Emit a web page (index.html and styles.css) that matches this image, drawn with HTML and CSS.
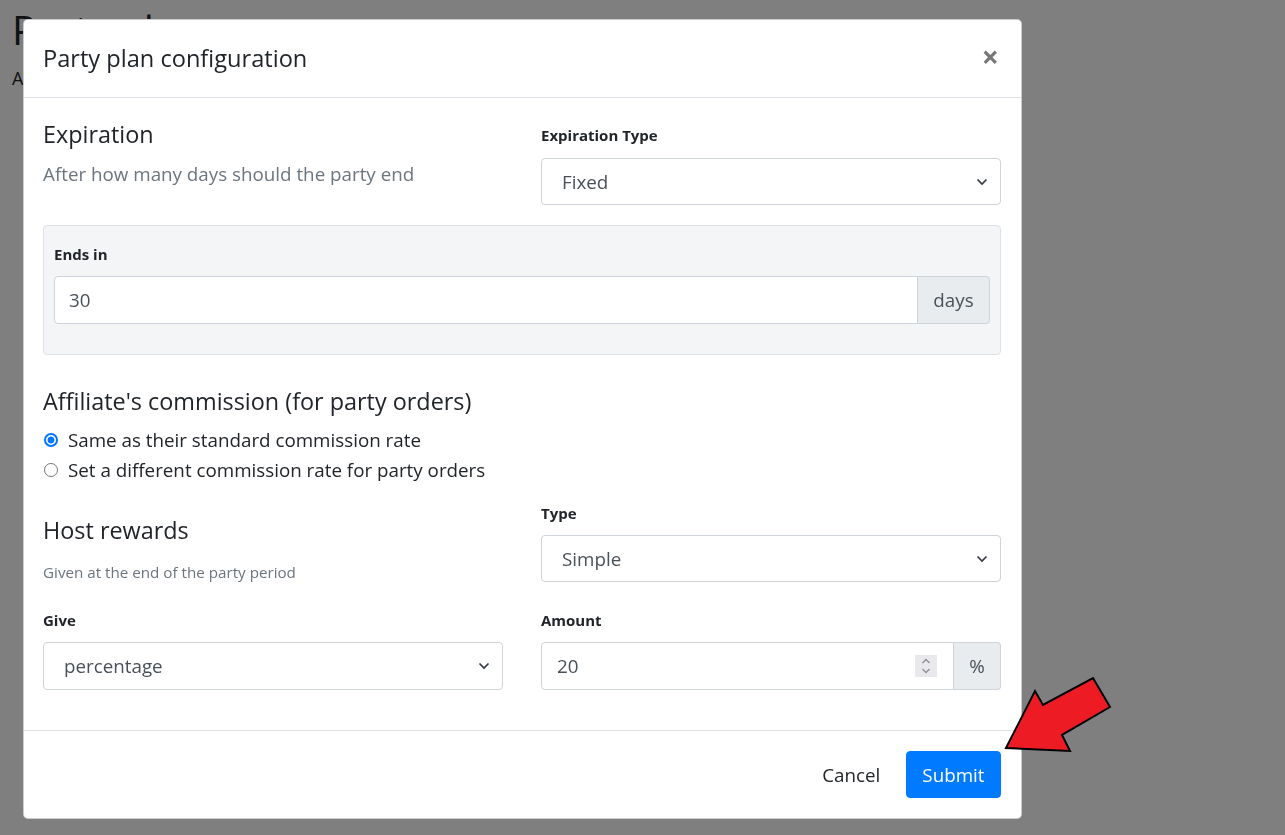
FILE: index.html
```html
<!DOCTYPE html>
<html>
<head>
<meta charset="utf-8">
<link rel="stylesheet" href="styles.css">
</head>
<body>
<div class="page">
  <h1 class="page-title">Party plans</h1>
  <p class="page-sub">A party plan lets affiliates host parties</p>
</div>
<div class="backdrop">
  <div class="modal">
    <div class="modal-header">
      <h5 class="modal-title">Party plan configuration</h5>
      <span class="close">&times;</span>
    </div>
    <div class="modal-body">
      <div class="row">
        <div class="col col-intro">
          <h4 class="section-title">Expiration</h4>
          <p class="section-desc">After how many days should the party end</p>
        </div>
        <div class="col">
          <label class="label label-first">Expiration Type</label>
          <div class="control select"><span>Fixed</span><svg class="chev" width="12" height="8" viewBox="0 0 12 8"><path d="M1.5 1.5 L6 6 L10.5 1.5" fill="none" stroke="#343a40" stroke-width="1.7"/></svg></div>
        </div>
      </div>
      <div class="panel">
        <label class="label">Ends in</label>
        <div class="input-group">
          <div class="control grow"><span>30</span></div>
          <div class="addon">days</div>
        </div>
      </div>
      <h4 class="section-title commission-title">Affiliate's commission (for party orders)</h4>
      <div class="radios">
        <div class="radio-row"><span class="radio checked"></span><span>Same as their standard commission rate</span></div>
        <div class="radio-row"><span class="radio"></span><span>Set a different commission rate for party orders</span></div>
      </div>
      <div class="row row-host">
        <div class="col col-host">
          <h4 class="section-title">Host rewards</h4>
          <p class="small-desc">Given at the end of the party period</p>
        </div>
        <div class="col">
          <label class="label">Type</label>
          <div class="control select"><span>Simple</span><svg class="chev" width="12" height="8" viewBox="0 0 12 8"><path d="M1.5 1.5 L6 6 L10.5 1.5" fill="none" stroke="#343a40" stroke-width="1.7"/></svg></div>
        </div>
      </div>
      <div class="row row-give">
        <div class="col">
          <label class="label">Give</label>
          <div class="control select tall"><span>percentage</span><svg class="chev" width="12" height="8" viewBox="0 0 12 8"><path d="M1.5 1.5 L6 6 L10.5 1.5" fill="none" stroke="#343a40" stroke-width="1.7"/></svg></div>
        </div>
        <div class="col">
          <label class="label">Amount</label>
          <div class="input-group">
            <div class="control grow number"><span>20</span><span class="spin"><svg width="10" height="18" viewBox="0 0 10 18"><path d="M1.5 6 L5 2.5 L8.5 6" fill="none" stroke="#8a8f96" stroke-width="1.3"/><path d="M1.5 12 L5 15.5 L8.5 12" fill="none" stroke="#8a8f96" stroke-width="1.3"/></svg></span></div>
            <div class="addon addon-pct">%</div>
          </div>
        </div>
      </div>
    </div>
    <div class="modal-footer">
      <button class="btn btn-link">Cancel</button>
      <button class="btn btn-primary">Submit</button>
    </div>
  </div>
  <svg class="arrow" width="130" height="100" viewBox="990 670 130 100"><polygon points="1006,748 1035,691 1043,705 1093,678 1110,707 1062,735 1070,751" fill="#ed1c24" stroke="#000" stroke-width="2" stroke-linejoin="miter"/></svg>
</div>
</body>
</html>
```
FILE: styles.css
```css
* { box-sizing: border-box; }
html, body { margin: 0; padding: 0; }
body {
  font-family: "Open Sans", "Noto Sans", sans-serif;
  color: #212529;
  background: #fff;
  width: 1285px;
  height: 835px;
  overflow: hidden;
}
.page { padding: 6px 12px; }
.page-title { font-size: 40px; font-weight: 400; margin: 0; line-height: 48px; }
.page-sub { font-size: 18px; margin: 12px 0 0; }

.backdrop {
  position: fixed;
  inset: 0;
  background: rgba(0, 0, 0, 0.5);
}
.modal {
  margin: 19px 0 0 23px;
  width: 999px;
  background: #fff;
  border-radius: 5px;
  border: 1px solid rgba(0,0,0,0.2);
  font-size: 18.8px;
}
.modal-header {
  display: flex;
  align-items: center;
  justify-content: space-between;
  padding: 21px 21px 22px 19px;
  border-bottom: 1px solid #dee2e6;
}
.modal-title {
  margin: 0;
  font-size: 23.6px;
  font-weight: 400;
  line-height: 34px;
}
.close {
  font-size: 30px;
  font-weight: 700;
  color: #777;
  line-height: 30px;
  margin-right: 1px;
  margin-top: -3px;
}
.modal-body { padding: 20px 20px 40px 19px; }
.row {
  display: grid;
  grid-template-columns: 1fr 1fr;
  column-gap: 38px;
}
.section-title {
  margin: 0;
  font-size: 23.4px;
  font-weight: 400;
  line-height: 30px;
}
.col-intro { padding-top: 1px; }
.section-desc {
  margin: 11px 0 0;
  color: #6c757d;
  font-size: 18.8px;
  line-height: 28px;
}
.small-desc {
  margin: 16px 0 0;
  color: #6c757d;
  font-size: 15.2px;
  line-height: 22px;
}
.label {
  display: block;
  font-size: 15px;
  font-weight: 700;
  line-height: 22px;
  margin: 6px 0 11px;
}
.label-first { margin-bottom: 12px; }
.control {
  height: 47px;
  border: 1px solid #ced4da;
  border-radius: 4px;
  background: #fff;
  display: flex;
  align-items: center;
  padding: 0 12px 0 20px;
  color: #495057;
  font-size: 18.8px;
}
.tall { height: 48px; }
.select { justify-content: space-between; }
.panel {
  margin-top: 20px;
  background: #f4f5f7;
  border: 1px solid #dee2e6;
  border-radius: 4px;
  padding: 17px 10px 30px;
}
.panel .label { margin: 0 0 11px; }
.input-group { display: flex; }
.grow { flex: 1; border-radius: 4px 0 0 4px; }
.panel .control { padding-left: 14px; height: 48px; }
.addon {
  display: flex;
  align-items: center;
  justify-content: center;
  width: 72px;
  background: #e9ecef;
  border: 1px solid #ced4da;
  border-left: 0;
  border-radius: 0 4px 4px 0;
  color: #495057;
  font-size: 18.8px;
}
.addon-pct { width: 47px; }
.number { justify-content: space-between; padding-left: 15px; padding-right: 16px; height: 48px; }
.spin {
  width: 22px;
  height: 22px;
  background: #e9e9ed;
  display: flex;
  align-items: center;
  justify-content: center;
}
.commission-title { margin-top: 31px; }
.radios { margin-top: 10px; }
.radio-row {
  display: flex;
  align-items: center;
  line-height: 28px;
  margin-bottom: 2px;
  font-size: 18.8px;
}
.radio {
  width: 14px;
  height: 14px;
  border-radius: 50%;
  border: 1px solid #767676;
  margin: 0 10px 0 1px;
  background: #fff;
}
.radio.checked {
  border: 2px solid #0075ff;
  background: radial-gradient(circle, #0075ff 0 3.2px, #fff 3.8px);
}
.row-host { margin-top: 12px; }
.col-host { padding-top: 19px; }
.row-give { margin-top: 20px; }
.modal-footer {
  display: flex;
  justify-content: flex-end;
  align-items: center;
  gap: 9px;
  padding: 20px 20px 20px 20px;
  border-top: 1px solid #dee2e6;
}
.btn {
  font-family: inherit;
  font-size: 18.8px;
  height: 47px;
  padding: 0 15.5px;
  border-radius: 4px;
  border: 1px solid transparent;
  background: none;
  cursor: pointer;
}
.btn-link { color: #212529; }
.btn-primary { background: #007bff; color: #fff; border-color: #007bff; }
.arrow {
  position: absolute;
  left: 990px;
  top: 670px;
}
```
